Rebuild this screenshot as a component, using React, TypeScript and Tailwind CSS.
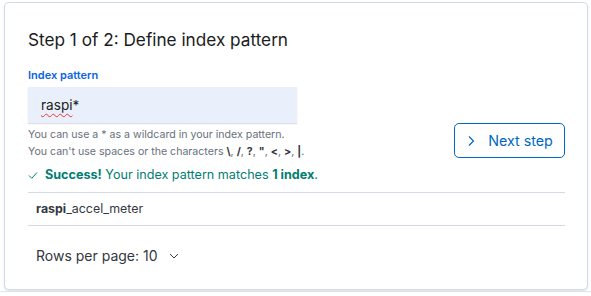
import React from "react";

const font = { fontFamily: "Inter, 'Noto Sans', sans-serif" };

const App: React.FC = () => {
  return (
    <div className="w-[591px] h-[296px] bg-white" style={font}>
      <div className="h-[292px] border-b border-[#e3e6ea] pt-[2px] pl-[4px] pr-[3px]">
        <div className="h-[288px] rounded-[5px] border border-[#d3dae6] bg-white shadow-[0_1px_2px_rgba(152,162,179,0.35)] pl-[23px] pr-[22px] pt-[23px]">
          <h1 className="text-[17.2px] leading-[28px] text-[#1a1c21] font-normal">
            Step 1 of 2: Define index pattern
          </h1>

          <div className="flex items-end justify-between mt-[13px]">
            <div className="flex flex-col">
              <label className="text-[11px] leading-[16px] font-semibold text-[#0b64dd]">
                Index pattern
              </label>
              <div className="mt-[4px] w-[269px] h-[36px] bg-[#e9f0fb] shadow-[0_1px_1px_rgba(152,162,179,0.35)] flex items-center pl-[13px]">
                <span className="text-[13.6px] text-[#1a1c21]">
                  <span className="underline decoration-wavy decoration-[#e33] decoration-1 underline-offset-[3px]">raspi</span>*
                </span>
              </div>
              <div className="mt-[3px] text-[10.6px] leading-[17px] text-[#69707d]">
                <div>You can use a * as a wildcard in your index pattern.</div>
                <div>
                  You can't use spaces or the characters{" "}
                  <span className="font-bold text-[#343741]">\</span>,{" "}
                  <span className="font-bold text-[#343741]">/</span>,{" "}
                  <span className="font-bold text-[#343741]">?</span>,{" "}
                  <span className="font-bold text-[#343741]">"</span>,{" "}
                  <span className="font-bold text-[#343741]">&lt;</span>,{" "}
                  <span className="font-bold text-[#343741]">&gt;</span>,{" "}
                  <span className="font-bold text-[#343741]">|</span>.
                </div>
              </div>
            </div>
            <button className="mb-[2px] w-[111px] h-[35px] rounded-[5px] border border-[#0068c2] text-[#0068c2] text-[14.3px] flex items-center justify-center gap-[12px]">
              <svg width="10" height="12" viewBox="0 0 10 12" fill="none">
                <path d="M3 1.5 L7.5 6 L3 10.5" stroke="#0068c2" strokeWidth="1.2" />
              </svg>
              <span>Next step</span>
            </button>
          </div>

          <div className="mt-[5px] flex items-center gap-[7px] text-[12.6px] leading-[20px] text-[#017d73]">
            <svg width="10" height="10" viewBox="0 0 10 10" fill="none">
              <path d="M1 5.5 L3.8 8.3 L9 2.5" stroke="#017d73" strokeWidth="1" />
            </svg>
            <span>
              <span className="font-bold">Success!</span> Your index pattern matches{" "}
              <span className="font-bold">1 index</span>.
            </span>
          </div>

          <div className="mt-[7px] border-t border-[#d3dae6] border-b h-[34px] flex items-center pl-[8px] text-[12.4px] text-[#343741]">
            <span className="font-bold">raspi</span>
            <span>_accel_meter</span>
          </div>

          <div className="mt-[19px] flex items-center pl-[8px] text-[14px] text-[#343741] gap-[10px]">
            <span>Rows per page: 10</span>
            <svg width="12" height="12" viewBox="0 0 12 12" fill="none">
              <path d="M2 4 L6 8 L10 4" stroke="#343741" strokeWidth="1" />
            </svg>
          </div>
        </div>
      </div>
    </div>
  );
};

export default App;
